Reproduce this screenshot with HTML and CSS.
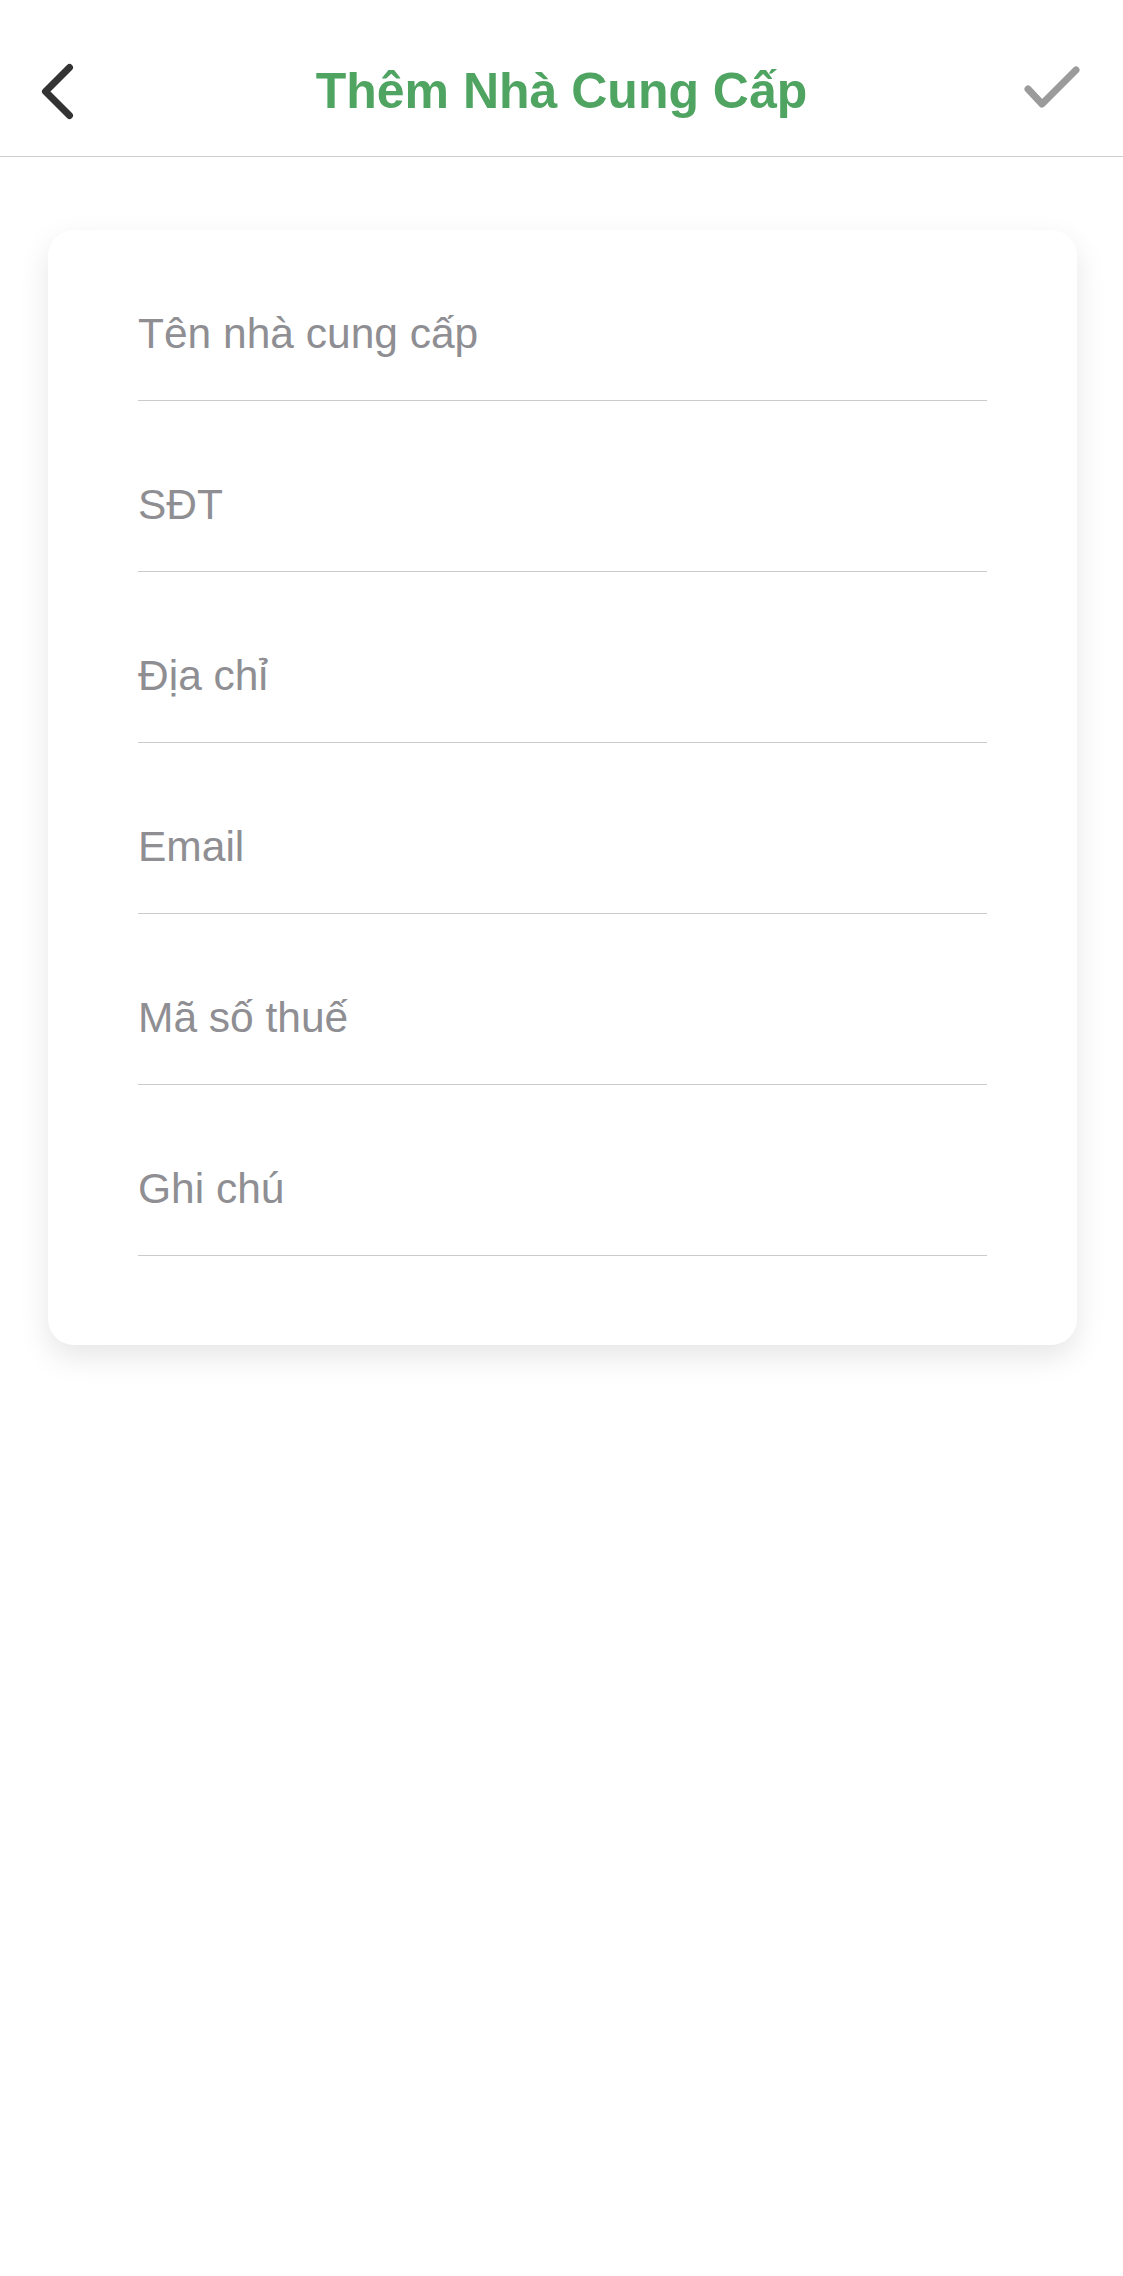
FILE: index.html
```html
<!DOCTYPE html>
<html lang="vi">
<head>
<meta charset="utf-8">
<title>Thêm Nhà Cung Cấp</title>
<link rel="stylesheet" href="styles.css">
</head>
<body>
<header class="topbar">
  <div class="back">
    <svg width="70" height="60" viewBox="0 0 70 60"><polyline points="49.5,6.5 25.5,30.5 49.5,54.5" fill="none" stroke="#333333" stroke-width="7" stroke-linecap="round" stroke-linejoin="round"/></svg>
  </div>
  <h1 class="title">Thêm Nhà Cung Cấp</h1>
  <div class="done">
    <svg width="70" height="60" viewBox="0 0 70 60"><polyline points="12,28 26,43 60,9" fill="none" stroke="#9b9b9b" stroke-width="7" stroke-linecap="round" stroke-linejoin="round"/></svg>
  </div>
</header>
<main class="content">
  <section class="card">
    <div class="field">Tên nhà cung cấp</div>
    <div class="field">SĐT</div>
    <div class="field">Địa chỉ</div>
    <div class="field">Email</div>
    <div class="field">Mã số thuế</div>
    <div class="field">Ghi chú</div>
  </section>
</main>
</body>
</html>
```
FILE: styles.css
```css
html, body {
  margin: 0;
  padding: 0;
  background: #ffffff;
  font-family: "Liberation Sans", Arial, sans-serif;
}
body {
  min-height: 2276px;
}
.topbar {
  display: grid;
  grid-template-columns: 1fr auto 1fr;
  align-items: center;
  height: 130px;
  padding-top: 26px;
  border-bottom: 1px solid #cfcfcf;
}
.back {
  justify-self: start;
  margin-left: 20px;
  display: flex;
}
.done {
  justify-self: end;
  margin-right: 37px;
  display: flex;
}
.title {
  margin: 0;
  font-size: 50px;
  font-weight: bold;
  color: #4fa462;
  line-height: 60px;
  white-space: nowrap;
}
.content {
  padding: 73px 46px 0 48px;
}
.card {
  background: #ffffff;
  border-radius: 26px;
  box-shadow: 0 12px 30px rgba(0, 0, 0, 0.1);
  padding: 0 90px 89px 90px;
}
.field {
  padding: 79px 0 41px 0;
  border-bottom: 1px solid #cbcbcf;
  font-size: 42.5px;
  line-height: 50px;
  height: 50px;
  color: #8e8e93;
  white-space: nowrap;
}
```
